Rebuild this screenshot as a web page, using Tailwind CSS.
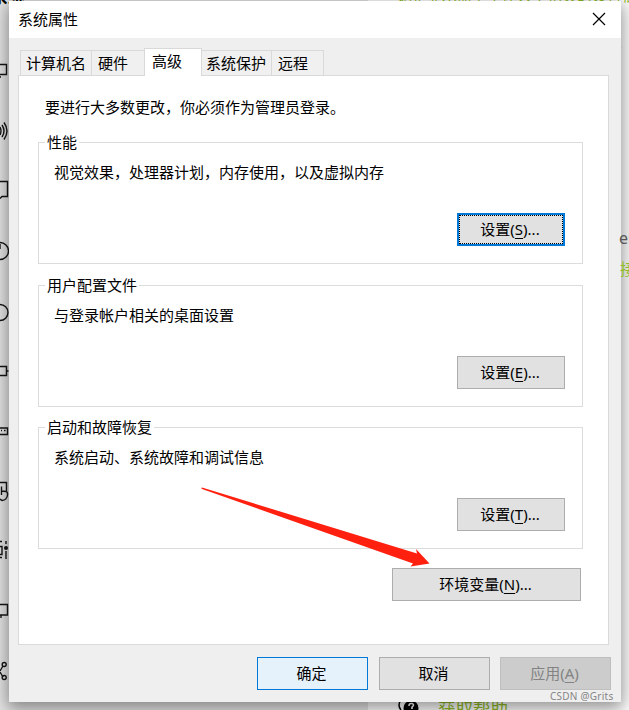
<!DOCTYPE html>
<html lang="zh-CN">
<head>
<meta charset="utf-8">
<title>系统属性</title>
<script src="https://cdn.jsdelivr.net/npm/@tailwindcss/browser@4"></script>
</head>
<body class="relative w-[629px] h-[710px] overflow-hidden bg-white font-['Noto_Sans','Noto_Sans_CJK_SC',sans-serif] text-[15px] leading-[20px] text-black">
<!-- Settings page behind the dialog -->
<div class="absolute inset-0 flex overflow-hidden" aria-hidden="true">
  <div class="w-[368px] bg-[#e6e6e6]"></div>
  <div class="flex-1 bg-white"></div>
</div>
<div class="absolute -left-[9px] -top-[13px] text-[17px] font-bold whitespace-nowrap">系统</div>
<div class="absolute left-[397px] -top-[15px] text-[15px] text-[#8fbd26] whitespace-nowrap">调整显示器上字体大小相关的设置信息</div>
<div class="absolute left-[607px] top-[37px] text-[#8fbd26]">多</div>
<div class="absolute left-[619px] top-[228px] z-10 text-[#555] text-[16px] whitespace-nowrap">el</div>
<div class="absolute left-[620px] top-[259px] z-10 text-[#8fbd26] text-[16px] whitespace-nowrap">接</div>
<div class="absolute left-[438px] top-[698px] text-[#8fbd26] text-[17.5px] whitespace-nowrap">获取帮助</div>
<svg class="absolute left-[396px] top-[698px]" width="26" height="12" viewBox="0 0 26 12"><path d="M5 2Q1 7 5 12" fill="none" stroke="#000" stroke-width="1.5"/><circle cx="15" cy="10" r="7.5" fill="#000"/><path d="M13 8q0-3 3-2.500q3 1 0 3.500v2" fill="none" stroke="#fff" stroke-width="1.6"/></svg>

<!-- Dialog -->
<main class="absolute left-[9px] top-[1px] w-[612px] h-[701px] bg-[#efefef] shadow-[0_5px_16px_2px_rgba(0,0,0,0.42)] flex flex-col">
  <header class="h-[37px] bg-white flex items-center justify-between pl-[9px] pr-[15px]">
    <h1 class="pb-[2px]">系统属性</h1>
    <svg class="-mt-px" width="14" height="14" viewBox="0 0 14 14"><path d="M1 1L13 13M13 1L1 13" stroke="#000" stroke-width="1.2"/></svg>
  </header>
  <nav class="relative z-10 h-[28px] flex items-end pl-[11px] pt-[10px] -mb-px box-content whitespace-nowrap">
    <div class="w-[72px] h-[26px] border border-[#d9d9d9] bg-[#f0f0f0] flex items-center pl-[5px]">计算机名</div>
    <div class="w-[53px] h-[26px] border-y border-[#d9d9d9] bg-[#f0f0f0] flex items-center pl-[6px]">硬件</div>
    <div class="w-[58px] h-[28px] -ml-px border border-b-0 border-[#d9d9d9] bg-white flex items-center pl-[7px] pb-[3px]">高级</div>
    <div class="w-[71px] h-[26px] -ml-px border border-[#d9d9d9] bg-[#f0f0f0] flex items-center pl-[4px]">系统保护</div>
    <div class="w-[53px] h-[26px] -ml-px border border-[#d9d9d9] bg-[#f0f0f0] flex items-center pl-[6px]">远程</div>
  </nav>
  <section class="ml-[9px] w-[591px] h-[570px] border border-[#dadada] bg-white pl-[19px] pr-[25px]">
    <p class="ml-[7px] mt-[21px] h-[20px] mb-[25px]">要进行大多数更改，你必须作为管理员登录。</p>
    <div class="w-[545px] h-[122px] mb-[21px] border border-[#dcdcdc] flex flex-col">
      <h2 class="-mt-[11px] ml-[6px] px-[2px] h-[20px] w-fit bg-white">性能</h2>
      <p class="mt-[10px] ml-[15px]">视觉效果，处理器计划，内存使用，以及虚拟内存</p>
      <button class="mt-[31px] ml-[418px] w-[108px] h-[33px] bg-[#e1e1e1] border-2 border-[#0078d7] p-0"><span class="flex h-full items-center justify-center border border-dotted border-black"><span class="pb-[2px] pr-[2px]">设置(<u class="underline-offset-[3px]">S</u>)...</span></span></button>
    </div>
    <div class="w-[545px] h-[122px] mb-[20px] border border-[#dcdcdc] flex flex-col">
      <h2 class="-mt-[11px] ml-[6px] px-[2px] h-[20px] w-fit bg-white">用户配置文件</h2>
      <p class="mt-[10px] ml-[15px]">与登录帐户相关的桌面设置</p>
      <button class="mt-[31px] ml-[418px] w-[108px] h-[33px] bg-[#e1e1e1] border border-[#adadad] pb-[2px] pr-[2px]">设置(<u class="underline-offset-[3px]">E</u>)...</button>
    </div>
    <div class="w-[545px] h-[122px] border border-[#dcdcdc] flex flex-col">
      <h2 class="-mt-[11px] ml-[6px] px-[2px] h-[20px] w-fit bg-white">启动和故障恢复</h2>
      <p class="mt-[10px] ml-[15px]">系统启动、系统故障和调试信息</p>
      <button class="mt-[31px] ml-[418px] w-[108px] h-[33px] bg-[#e1e1e1] border border-[#adadad] pb-[2px] pr-[2px]">设置(<u class="underline-offset-[3px]">T</u>)...</button>
    </div>
    <button class="block mt-[19px] ml-[354px] w-[189px] h-[33px] bg-[#e1e1e1] border border-[#adadad] pb-[2px] pr-[2px]">环境变量(<u class="underline-offset-[3px]">N</u>)...</button>
  </section>
  <footer class="mt-[12px] ml-[248px] flex">
    <button class="w-[111px] h-[33px] bg-[#e5f1fb] border border-[#0078d7] pb-[2px] pr-[2px]">确定</button>
    <button class="ml-[11px] w-[111px] h-[33px] bg-[#e1e1e1] border border-[#adadad] pb-[2px] pr-[2px]">取消</button>
    <button class="ml-[10px] w-[111px] h-[33px] bg-[#cccccc] border border-[#bfbfbf] text-[#838383] pb-[2px] pr-[2px]">应用(<u class="underline-offset-[3px]">A</u>)</button>
  </footer>
</main>

<!-- Sidebar icons showing past the dialog's left edge -->
<svg class="absolute left-0 top-0" width="9" height="710" viewBox="0 0 9 710" fill="none" stroke="#111" stroke-width="1.4">
  <path d="M0 64.500H6.500V74.500H0M0 77H1"/>
  <path d="M0 127q2 4 0 8M2 125q4 6 0 12M4 122.500q6 8.500 0 17"/>
  <path d="M0 181.500H7.500V196.500H2L0 198.500"/>
  <path d="M0 242.500A8 8 0 0 1 0 259.500M0 244V249"/>
  <path d="M0 304.500A8 8 0 0 1 0 320.500"/>
  <path d="M0 366.500H6.500V375.500H0M7 371H8.500" stroke-width="1.500"/>
  <path d="M0 428H7.500V434.500H0M1 430.500H2M4 430.500H5.500"/>
  <path d="M0 482.500H6.500V491M1.500 495V486.500M1.500 491L6 491.500Q8 492 7.500 495Q7 500 2 500.500L0 499"/>
  <path d="M0 546.500H2V554.500H0M0 541.500H2M0 557.500H2M6 541V544M6 551V559"/><circle cx="6" cy="548" r="2" fill="#111" stroke="none"/>
  <path d="M0 604.500H7.500V615H0M1 615V618"/>
  <path d="M0 671L3 666M0 672L3 677"/><circle cx="4.200" cy="664.500" r="2"/><circle cx="4.200" cy="677.500" r="2"/>
</svg>

<svg class="absolute left-[200px] top-[484px]" width="232" height="86" viewBox="200 484 232 86"><path d="M202 487.500L417 553.500L416 549L429.500 563.500L410.500 566.500L413 563.500L202 489Q201 488 202 487.500Z" fill="#ff2010"/></svg>
<div class="absolute left-[550px] top-[689px] h-[14px] leading-[14px] text-[10px] tracking-[0.25px] text-[#858585] font-['Noto_Sans'] whitespace-nowrap">CSDN @Grits</div>
</body>
</html>
